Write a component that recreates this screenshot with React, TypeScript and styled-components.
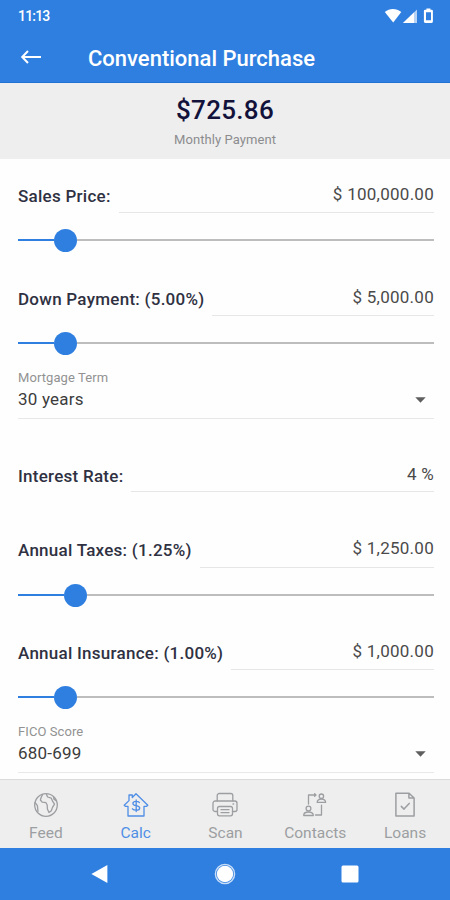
import React from "react";
import styled, { createGlobalStyle } from "styled-components";

const BLUE = "#2f7fe0";

const GlobalStyle = createGlobalStyle`
  *, *::before, *::after { box-sizing: border-box; }
  body { margin: 0; background: #fefefe; font-family: Roboto, sans-serif; }
`;

const Screen = styled.div`
  width: 450px;
  height: 900px;
  display: flex;
  flex-direction: column;
  overflow: hidden;
  background: #fefefe;
`;

const StatusBar = styled.div`
  height: 32px;
  display: flex;
  align-items: center;
  justify-content: space-between;
  padding: 0 16px 0 18px;
  background: ${BLUE};
  color: #fff;
`;

const Clock = styled.span`
  font-size: 14px;
  font-weight: 500;
  line-height: 16px;
  letter-spacing: -0.8px;
`;

const AppBar = styled.header`
  height: 51px;
  display: flex;
  align-items: center;
  gap: 46px;
  padding: 0 20px 0;
  background: ${BLUE};
  border-bottom: 1px solid #2272d6;
  color: #fff;
`;

const Title = styled.h1`
  margin: 3px 0 0;
  font-size: 22px;
  line-height: 28px;
  font-weight: 500;
  white-space: nowrap;
`;

const Summary = styled.section`
  height: 76px;
  display: flex;
  flex-direction: column;
  align-items: center;
  padding-top: 11px;
  background: #eeeeee;
`;

const Amount = styled.div`
  font-size: 26px;
  line-height: 32px;
  font-weight: 500;
  letter-spacing: 0.3px;
  color: #12123a;
`;

const Caption = styled.div`
  margin-top: 6px;
  font-size: 13px;
  line-height: 16px;
  letter-spacing: 0.08px;
  color: #8c8c8e;
`;

const Form = styled.main`
  flex: 1;
  min-height: 0;
  padding: 21px 16px 0 18px;
`;

const Field = styled.div<{ $top: number; $drop: number }>`
  height: 33px;
  margin-top: ${(p) => p.$top}px;
  display: flex;
  gap: 8px;

  > label { padding-top: ${(p) => 5 + p.$drop}px; }
  > div { padding-top: ${(p) => 3 + p.$drop}px; }
`;

const FieldLabel = styled.label`
  font-size: 17px;
  line-height: 22px;
  font-weight: 500;
  letter-spacing: 0.26px;
  color: #2f3142;
  white-space: nowrap;
`;

const FieldValue = styled.div`
  flex: 1;
  border-bottom: 1px solid #e6e6e6;
  text-align: right;
  font-size: 17px;
  line-height: 22px;
  letter-spacing: 0.26px;
  color: #4a4a4a;
`;

const Slider = styled.div`
  height: 22px;
  margin-top: 16px;
  display: flex;
  align-items: center;
`;

const Filled = styled.div<{ $width: number }>`
  width: ${(p) => p.$width}px;
  height: 2px;
  background: ${BLUE};
`;

const Thumb = styled.div`
  width: 23px;
  height: 23px;
  flex: none;
  border-radius: 50%;
  background: ${BLUE};
`;

const Rail = styled.div`
  flex: 1;
  height: 2px;
  background: #bdbdbd;
`;

const Select = styled.div`
  height: 50px;
  margin-top: 15px;
  padding-top: 1px;
  border-bottom: 1px solid #e8e8e8;
`;

const SelectLabel = styled.div`
  font-size: 13px;
  line-height: 16px;
  letter-spacing: 0.08px;
  color: #929292;
`;

const SelectRow = styled.div`
  display: flex;
  align-items: center;
  justify-content: space-between;
  padding: 2px 8px 0 0;
  font-size: 17px;
  line-height: 22px;
  letter-spacing: 0.2px;
  color: #3c3c3c;

  svg { margin-top: 1px; }
`;

const TabBar = styled.nav`
  height: 69px;
  display: grid;
  grid-template-columns: repeat(5, 1fr);
  padding-left: 1px;
  background: #eeeeee;
  border-top: 1px solid #dadada;
`;

const Tab = styled.div<{ $active?: boolean }>`
  display: flex;
  flex-direction: column;
  align-items: center;
  padding-top: 11px;
  font-size: 15.5px;
  line-height: 20px;
  color: ${(p) => (p.$active ? "#4f8ee6" : "#9c9ea1")};

  svg { margin-bottom: 4px; }
`;

const SystemBar = styled.footer`
  height: 52px;
  display: grid;
  grid-template-columns: 125px 125px 125px;
  justify-content: center;
  place-items: center;
  background: ${BLUE};
`;

const iconProps = {
  width: 28,
  height: 28,
  viewBox: "0 0 28 28",
  fill: "none",
  stroke: "currentColor",
  strokeWidth: 1.3,
  strokeLinejoin: "round" as const,
  strokeLinecap: "round" as const,
};

const GlobeIcon = () => (
  <svg {...iconProps}>
    <circle cx="14" cy="14" r="11.3" />
    <path d="M10.6 3.4 9.2 6.2 8.4 9l1.8 2.2 3.8.5 1.2 2.3.2 4 1.6 3.6 2.3-1.8 1.2-3.4 2-3.2-1.8-2.8-1.4-3.2-3.6-1.2-1.2-2.4M3.2 11.6l2.2 3 .6 5.8M21.6 6.2l.4 2.1 2.4 1.6" />
  </svg>
);

const HouseIcon = () => (
  <svg {...iconProps}>
    <path d="M2.2 14.2 7 9.6V4h3.3v2.5L14 2.8l11.8 11.4-1.4 1.2H22V25H6v-9.6H3.6Z" />
    <path d="M17.5 11.6c-.8-.9-1.9-1.2-3.4-1.2-1.9 0-3.2.7-3.2 2 0 3.2 6.8 1.3 6.8 4.6 0 1.5-1.4 2.2-3.5 2.2-1.7 0-3-.4-3.8-1.4M14.2 9v11.6" />
  </svg>
);

const PrinterIcon = () => (
  <svg {...iconProps}>
    <path d="M6.2 10V4.5a2 2 0 0 1 2-2h11.6a2 2 0 0 1 2 2V10" />
    <path d="M5.8 20.5H4a2 2 0 0 1-2-2v-6.3A2.2 2.2 0 0 1 4.2 10h19.6a2.2 2.2 0 0 1 2.2 2.2v6.3a2 2 0 0 1-2 2h-1.8" />
    <path d="M8.5 15.5h11a2 2 0 0 1 2 2v5.3a2 2 0 0 1-2 2h-11a2 2 0 0 1-2-2v-5.3a2 2 0 0 1 2-2ZM10 18.7h8M10 21.6h8M22 13h.6" />
  </svg>
);

const ContactsIcon = () => (
  <svg {...iconProps}>
    <path d="M7.5 13V4h7.2M13.6 2.7 15 4l-1.4 1.4M20.5 14.2V24h-6" />
    <circle cx="20.4" cy="5.2" r="2.2" />
    <path d="M16.2 11.4c0-2 1.8-3.3 4.2-3.3s4.2 1.3 4.2 3.3Z" />
    <circle cx="7.5" cy="17.6" r="2.4" />
    <path d="M2.7 24.5c0-2.3 2-3.5 4.8-3.5s4.8 1.2 4.8 3.5Z" />
  </svg>
);

const DocumentIcon = () => (
  <svg {...iconProps} strokeWidth={1.5}>
    <path d="M4.9 2.2h13.2L23.1 7v18H4.9ZM17.9 2.4V7h5M10.3 15.4l2.7 2.7 5.2-5.7" />
  </svg>
);

const BackArrow = () => (
  <svg width="22" height="18" viewBox="0 0 22 18" fill="none" stroke="#fff" strokeWidth="2">
    <path d="M21 9H2.5M8 3 2.2 9 8 15" />
  </svg>
);

const StatusIcons = () => (
  <svg width="50" height="18" viewBox="0 0 50 18" fill="#fff">
    <path d="M.8 5C5.5 1 12.3 1 17.3 5L9.2 15.5Z" />
    <path d="M33 2.5V16H19Z" opacity=".65" />
    <path d="M30 5.4V16H19Z" />
    <path fillRule="evenodd" d="M42.4 1.5h4v1.3h1.2q1.3 0 1.3 1.3v10.4q0 1.4-1.3 1.4h-6.4q-1.3 0-1.3-1.4V4.1q0-1.3 1.3-1.3h1.2ZM42 5.2v8.1h5V5.2Z" />
  </svg>
);

const Caret = () => (
  <svg width="11" height="6" viewBox="0 0 11 6" fill="#5e5e5e">
    <path d="M.3.3h10.4L5.5 5.7Z" />
  </svg>
);

type MoneyProps = { label: string; value: string; top?: number; drop?: number };

const Money = ({ label, value, top = 0, drop = 0 }: MoneyProps) => (
  <Field $top={top} $drop={drop}>
    <FieldLabel>{label}</FieldLabel>
    <FieldValue>{value}</FieldValue>
  </Field>
);

const Range = ({ filled }: { filled: number }) => (
  <Slider>
    <Filled $width={filled} />
    <Thumb />
    <Rail />
  </Slider>
);

const Picker = ({ label, value }: { label: string; value: string }) => (
  <Select>
    <SelectLabel>{label}</SelectLabel>
    <SelectRow>
      {value}
      <Caret />
    </SelectRow>
  </Select>
);

const tabs = [
  { name: "Feed", Icon: GlobeIcon },
  { name: "Calc", Icon: HouseIcon, active: true },
  { name: "Scan", Icon: PrinterIcon },
  { name: "Contacts", Icon: ContactsIcon },
  { name: "Loans", Icon: DocumentIcon },
];

export default function App() {
  return (
    <>
      <GlobalStyle />
      <Screen>
        <StatusBar>
          <Clock>11:13</Clock>
          <StatusIcons />
        </StatusBar>
        <AppBar>
          <BackArrow />
          <Title>Conventional Purchase</Title>
        </AppBar>
        <Summary>
          <Amount>$725.86</Amount>
          <Caption>Monthly Payment</Caption>
        </Summary>
        <Form>
          <Money label="Sales Price:" value="$ 100,000.00" />
          <Range filled={36} />
          <Money label="Down Payment: (5.00%)" value="$ 5,000.00" top={32} />
          <Range filled={36} />
          <Picker label="Mortgage Term" value="30 years" />
          <Money label="Interest Rate:" value="4 %" top={40} drop={1} />
          <Money label="Annual Taxes: (1.25%)" value="$ 1,250.00" top={43} drop={-1} />
          <Range filled={46} />
          <Money label="Annual Insurance: (1.00%)" value="$ 1,000.00" top={31} />
          <Range filled={36} />
          <Picker label="FICO Score" value="680-699" />
        </Form>
        <TabBar>
          {tabs.map(({ name, Icon, active }) => (
            <Tab key={name} $active={active}>
              <Icon />
              {name}
            </Tab>
          ))}
        </TabBar>
        <SystemBar>
          <svg width="18" height="20" viewBox="0 0 18 20" fill="#fff">
            <path d="M16.4 1v18L.4 10Z" />
          </svg>
          <svg width="22" height="22" viewBox="0 0 22 22" fill="#fff">
            <circle cx="11" cy="11" r="9.6" fill="none" stroke="#fff" strokeOpacity=".75" strokeWidth="1.4" />
            <circle cx="11" cy="11" r="8.2" />
          </svg>
          <svg width="18" height="18" viewBox="0 0 18 18" fill="#fff">
            <rect x=".5" y=".5" width="17" height="17" rx="1.5" />
          </svg>
        </SystemBar>
      </Screen>
    </>
  );
}
